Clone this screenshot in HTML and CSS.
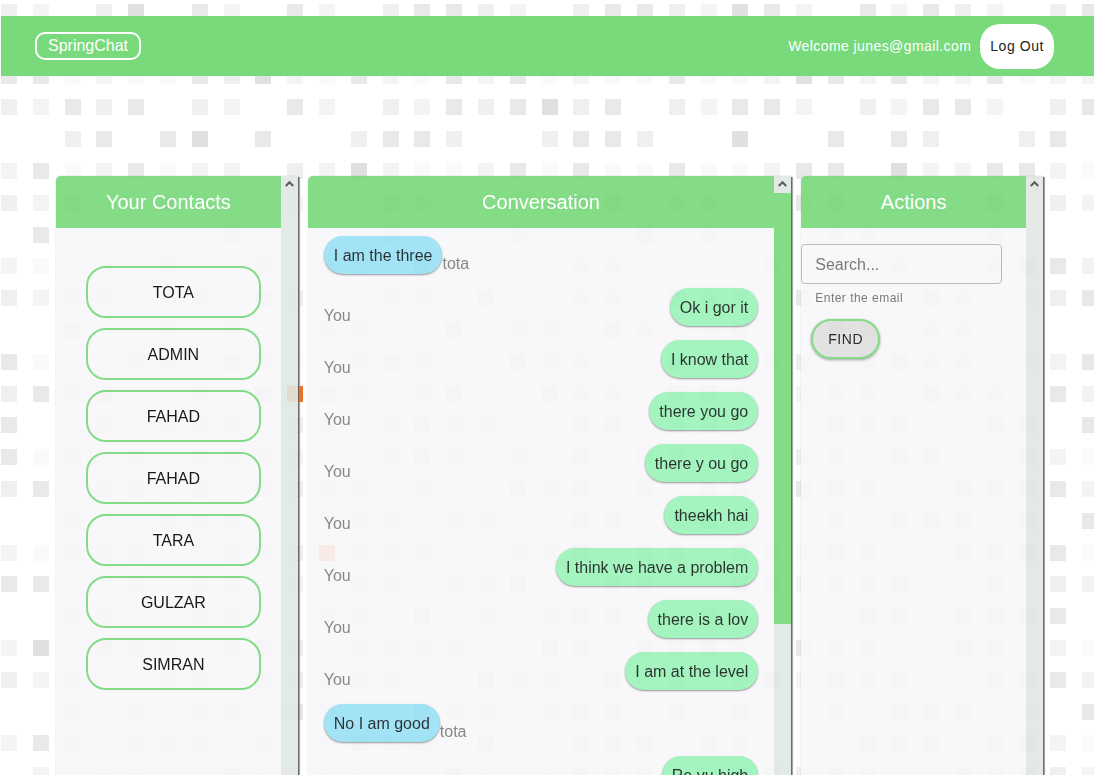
FILE: index.html
```html
<!DOCTYPE html>
<html lang="en">
<head>
<meta charset="utf-8">
<meta name="viewport" content="width=device-width, initial-scale=1">
<title>SpringChat</title>
<link rel="stylesheet" href="styles.css">
</head>
<body>
<svg class="mosaic" id="mosaic" viewBox="0 0 1094 775" preserveAspectRatio="xMinYMin slice" aria-hidden="true"></svg>

<header class="topbar">
  <a class="brand" href="#">SpringChat</a>
  <div class="account">
    <span class="welcome">Welcome junes@gmail.com</span>
    <button class="logout" type="button">Log Out</button>
  </div>
</header>

<main class="board">
  <section class="panel">
    <div class="panel-content">
      <h2 class="panel-title">Your Contacts</h2>
      <div class="contacts">
        <button class="contact" type="button">TOTA</button>
        <button class="contact" type="button">ADMIN</button>
        <button class="contact" type="button">FAHAD</button>
        <button class="contact" type="button">FAHAD</button>
        <button class="contact" type="button">TARA</button>
        <button class="contact" type="button">GULZAR</button>
        <button class="contact" type="button">SIMRAN</button>
      </div>
    </div>
    <div class="scroll" aria-hidden="true">
      <svg class="scroll-arrow" viewBox="0 0 17 17"><path d="M4.8 10 8.5 6.2 12.2 10"/></svg>
    </div>
  </section>

  <section class="panel">
    <div class="panel-content">
      <h2 class="panel-title">Conversation</h2>
      <div class="messages">
        <div class="message"><p class="bubble theirs">I am the three</p><span class="sender">tota</span></div>
        <div class="message own"><span class="sender">You</span><p class="bubble mine">Ok i gor it</p></div>
        <div class="message own"><span class="sender">You</span><p class="bubble mine">I know that</p></div>
        <div class="message own"><span class="sender">You</span><p class="bubble mine">there you go</p></div>
        <div class="message own"><span class="sender">You</span><p class="bubble mine">there y ou go</p></div>
        <div class="message own"><span class="sender">You</span><p class="bubble mine">theekh hai</p></div>
        <div class="message own"><span class="sender">You</span><p class="bubble mine">I think we have a problem</p></div>
        <div class="message own"><span class="sender">You</span><p class="bubble mine">there is a lov</p></div>
        <div class="message own"><span class="sender">You</span><p class="bubble mine">I am at the level</p></div>
        <div class="message"><p class="bubble theirs">No I am good</p><span class="sender">tota</span></div>
        <div class="message own"><span class="sender">You</span><p class="bubble mine">Re yu high</p></div>
      </div>
    </div>
    <div class="scroll" aria-hidden="true">
      <svg class="scroll-arrow" viewBox="0 0 17 17"><path d="M4.8 10 8.5 6.2 12.2 10"/></svg>
      <div class="scroll-thumb" style="height:72%"></div>
    </div>
  </section>

  <section class="panel">
    <div class="panel-content">
      <h2 class="panel-title">Actions</h2>
      <form class="finder">
        <input class="search" id="search" type="text" placeholder="Search...">
        <label class="hint" for="search">Enter the email</label>
        <button class="find" type="button">FIND</button>
      </form>
    </div>
    <div class="scroll" aria-hidden="true">
      <svg class="scroll-arrow" viewBox="0 0 17 17"><path d="M4.8 10 8.5 6.2 12.2 10"/></svg>
    </div>
  </section>
</main>
<script src="mosaic.js"></script>
</body>
</html>
```
FILE: styles.css
```css
* { box-sizing: border-box; }

body {
  margin: 0;
  height: 100vh;
  display: flex;
  flex-direction: column;
  overflow: hidden;
  padding: 16px 0 0 1px;
  background: #fff;
  font-family: "Liberation Sans", Arial, sans-serif;
  font-size: 16px;
  line-height: 18px;
}

button, input { font: inherit; }

.mosaic {
  position: fixed;
  inset: 0;
  width: 100%;
  height: 100%;
  z-index: -1;
}

.shade-1 { fill: #fafafa; }
.shade-2 { fill: #f4f4f4; }
.shade-3 { fill: #efefef; }
.shade-4 { fill: #e9e9e9; }
.shade-5 { fill: #e0e0e0; }
.shade-o { fill: #e8701e; }
.shade-p { fill: #ff7733; }

.topbar {
  flex: none;
  height: 60px;
  display: flex;
  align-items: center;
  justify-content: space-between;
  padding: 0 40px 0 34px;
  background: #78da7a;
}

.brand {
  padding: 3px 11px;
  border: 2px solid #fff;
  border-radius: 10px;
  color: #fff;
  text-decoration: none;
}

.account {
  display: flex;
  align-items: center;
  gap: 9px;
  font-size: 14px;
  letter-spacing: 0.03em;
}

.welcome { color: #fff; }

.logout {
  height: 45px;
  padding: 0 10px;
  border: 0;
  border-radius: 20px;
  background: #fff;
  color: #222;
  letter-spacing: 0.04em;
}

.board {
  flex: 1;
  min-height: 0;
  display: grid;
  grid-template-columns: 1fr 2fr 1fr;
  grid-template-rows: 100%;
  gap: 10px;
  margin: 100px 51px 0 55px;
}

.panel {
  min-width: 0;
  display: flex;
  border-radius: 5px 0 0 0;
  background: #f8f8fb;
  box-shadow: 1px 1px 1px #555, 2px 1px 1px #999, 0 0 1px #888;
  opacity: 0.9;
}

.panel-content {
  flex: 1;
  min-width: 0;
  overflow: hidden;
  border-radius: 5px 0 0 0;
}

.panel-title {
  margin: 0;
  padding: 14px 0;
  background: #77d97a;
  color: #fff;
  font-size: 20px;
  font-weight: 400;
  line-height: 24px;
  text-align: center;
}

.scroll {
  flex: none;
  width: 17px;
  background: #e0e8e3;
}

.scroll-arrow {
  display: block;
  width: 17px;
  height: 17px;
  fill: none;
  stroke: #4a4a4a;
  stroke-width: 2;
}

.scroll-thumb { background: #77d97a; }

.contacts {
  display: flex;
  flex-direction: column;
  gap: 10px;
  padding: 38px 20px 0 30px;
}

.contact {
  height: 52px;
  padding: 2px 0 0;
  border: 2px solid #77d97a;
  border-radius: 20px;
  background: transparent;
  color: #000;
}

.messages { padding: 8px 16px 0; }

.message {
  display: flex;
  align-items: flex-start;
  height: 52px;
}

.own { justify-content: space-between; }

.bubble {
  margin: 0;
  padding: 11px 10px 9px;
  border-radius: 20px;
  color: rgba(0, 0, 0, 0.87);
  box-shadow: 0 1px 2px rgba(0, 0, 0, 0.45);
}

.theirs { background: #99e0f5; }
.mine { background: #99f3b9; }

.sender {
  padding-top: 19px;
  color: #7b7b7b;
}

.finder {
  display: flex;
  flex-direction: column;
  align-items: flex-start;
  padding: 16px 24px 0 0;
}

.search {
  width: 100%;
  height: 40px;
  padding: 2px 13px 0;
  border: 1px solid #b4b4b6;
  border-radius: 4px;
  background: transparent;
  color: #222;
}

.search::placeholder { color: #6c6c6e; }

.hint {
  margin: 5px 0 12px 14px;
  color: #6c6c6e;
  font-size: 12px;
  letter-spacing: 0.04em;
}

.find {
  height: 40px;
  margin-left: 10px;
  padding: 0 15px;
  border: 2px solid #77d97a;
  border-radius: 20px;
  background: #dfdfdf;
  color: #111;
  font-size: 14px;
  letter-spacing: 0.04em;
  box-shadow: 0 1px 3px rgba(0, 0, 0, 0.4);
}
```
FILE: mosaic.js
```js
// One string per row of the backdrop; each character is the shade of a
// square, 0 is empty, o and p are the orange accents. Spaces only group.
const rows = [
  "32 0350420 4 203443203443254 2 0424320 34",
  "",
  "44 1211435 2 142142412114112 5 4242241 22",
  "32 4340320 4 203243453403244 2 0324420 34",
  "00 3404504 0 034430034430050 0 4043003 40",
  "24 1241220 3 252112414114112 4 4052244 21",
  "32 5005020 2 005400445504400 4 5044050 32",
  "04 2200340 0 004302430350430 0 4400240 00",
  "21 3304034 0 320543034403304 0 3440345 42",
  "32 4403405 3 304405034405440 4 4305403 34",
  "00 5034040 0 440350440540340 0 5404430 00",
  "41 0344054 1 045403544035404 3 0454403 24",
  "34 4503405 o 540453054404530 2 4405440 42",
  "40 3405440 3 405544034504403 0 5440354 04",
  "41 5340454 2 034540435044053 3 4054304 21",
  "34 0453404 3 540430545340440 4 5430544 42",
  "00 4304540 0 345044035404530 0 4045404 04",
  "21 5440354 3 p45403445044054 1 5403445 41",
  "44 0350440 2 354044530440354 2 4450340 32",
  "00 4403540 0 440534045403440 0 3540454 40",
  "25 3544045 3 045440354044530 4 4403540 21",
  "32 4035404 3 454035440534045 2 5440344 42",
  "00 5340450 4 403544045404350 0 4054403 04",
  "24 4054405 0 354405304450440 0 3544045 21",
  "02 3440354 0 440354045440354 3 5403544 32",
];

const pitch = 31.8;
const mosaic = document.getElementById("mosaic");
rows.forEach((row, r) => {
  [...row.replaceAll(" ", "")].forEach((shade, c) => {
    if (shade === "0") return;
    const square = document.createElementNS("http://www.w3.org/2000/svg", "rect");
    square.setAttribute("x", Math.round(1 + c * pitch));
    square.setAttribute("y", Math.round(4 + r * pitch));
    square.setAttribute("width", 16);
    square.setAttribute("height", 16);
    square.setAttribute("class", "shade-" + shade);
    mosaic.append(square);
  });
});
```
